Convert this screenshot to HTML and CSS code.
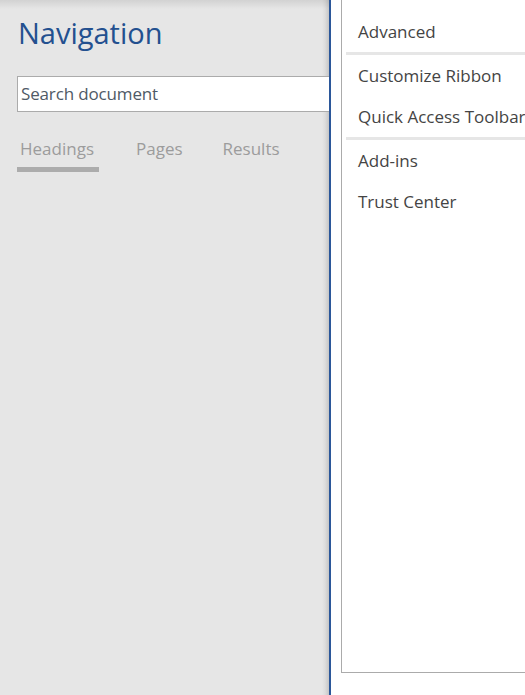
FILE: index.html
```html
<!DOCTYPE html>
<html>
<head>
<meta charset="utf-8">
<link rel="stylesheet" href="styles.css">
</head>
<body>
<div class="app">
  <aside class="nav">
    <h1 class="nav-title">Navigation</h1>
    <div class="search">Search document</div>
    <div class="tabs">
      <span class="tab active">Headings</span>
      <span class="tab">Pages</span>
      <span class="tab">Results</span>
    </div>
  </aside>
  <div class="divider"></div>
  <main class="options">
    <div class="options-box">
      <div class="item">Advanced</div>
      <div class="sep"></div>
      <div class="item">Customize Ribbon</div>
      <div class="item">Quick Access Toolbar</div>
      <div class="sep"></div>
      <div class="item">Add-ins</div>
      <div class="item">Trust Center</div>
    </div>
  </main>
</div>
</body>
</html>
```
FILE: styles.css
```css
html, body {
  margin: 0;
  padding: 0;
  width: 525px;
  height: 695px;
  overflow: hidden;
  background: #fff;
  font-family: "Open Sans", "Noto Sans", sans-serif;
}
.app {
  display: flex;
  height: 695px;
}
.nav {
  width: 329px;
  flex: none;
  overflow: hidden;
  background:
    linear-gradient(to right, rgba(0,0,0,0) 0, rgba(0,0,0,0) 322px, rgba(0,0,0,0.04) 325px, rgba(0,0,0,0.14) 329px),
    linear-gradient(to bottom, #d2d2d2 0, #e6e6e6 9px, #e6e6e6 100%);
  box-sizing: border-box;
  padding: 13px 0 0 17px;
}
.nav-title {
  margin: 0;
  font-weight: 400;
  font-size: 29px;
  line-height: 40px;
  color: #23508f;
  padding-left: 1px;
}
.search {
  margin-top: 23px;
  width: 340px;
  height: 36px;
  box-sizing: border-box;
  border: 1px solid #ababab;
  background: #fff;
  font-size: 17px;
  line-height: 34px;
  padding-left: 3px;
  color: #4f5a66;
  letter-spacing: -0.15px;
}
.tabs {
  display: flex;
  margin-top: 24px;
}
.tab {
  font-size: 17px;
  line-height: 26px;
  color: #9c9c9c;
  margin-right: 40px;
  padding-bottom: 5px;
}
.tab.active {
  padding-left: 3px;
  padding-right: 5px;
  border-bottom: 5px solid #acacac;
  margin-right: 37px;
}
.divider {
  width: 2px;
  flex: none;
  background: #2b579a;
}
.options {
  flex: 1;
  background: #fff;
  padding-left: 10px;
  overflow: hidden;
}
.options-box {
  height: 673px;
  border-left: 1px solid #ababab;
  border-bottom: 1px solid #ababab;
  box-sizing: border-box;
  padding-top: 11px;
  padding-left: 4px;
  width: 400px;
}
.item {
  height: 41px;
  line-height: 41px;
  padding-left: 12px;
  font-size: 17px;
  color: #444;
  white-space: nowrap;
}
.sep {
  height: 3px;
  background: #e6e6e6;
}
```
